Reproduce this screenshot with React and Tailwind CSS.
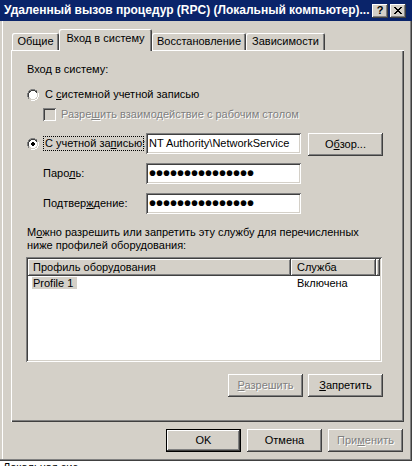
const raised =
  "shadow-[inset_-1px_-1px_#404040,inset_1px_1px_#ffffff,inset_-2px_-2px_#808080,inset_2px_2px_#d4d0c8]";
const defRaised =
  "shadow-[inset_0_0_0_1px_#000000,inset_-2px_-2px_#404040,inset_2px_2px_#ffffff,inset_-3px_-3px_#808080]";
const sunken =
  "shadow-[inset_1px_1px_#808080,inset_-1px_-1px_#ffffff,inset_2px_2px_#404040,inset_-2px_-2px_#d4d0c8]";
const disabledText = "text-[#808080] [text-shadow:1px_1px_0_#ffffff]";

const Btn = ({ children, disabled, isDefault, className = "" }) => (
  <div
    className={`flex h-[23px] w-[75px] items-center justify-center bg-[#d4d0c8] ${
      isDefault ? defRaised : raised
    } ${disabled ? disabledText : "text-black"} ${className}`}
  >
    <span className="whitespace-nowrap">{children}</span>
  </div>
);

const Radio = ({ checked }) => (
  <svg width="12" height="12" viewBox="0 0 12 12" className="shrink-0">
    <path d="M4 0h4v1h2v1h-2v-1h-4v1h-2v2h-1v4h1v2h-1v-2h-1v-4h1v-2h1v-1h1z" fill="#808080" />
    <path d="M4 1h4v1h2v2h-1v-1h-1v-1h-4v1h-1v1h-1v4h-1v-4h1v-2h2z" fill="#404040" />
    <path d="M4 2h4v1h1v1h1v4h-1v1h-1v1h-4v-1h-1v-1h-1v-4h1v-1h1z" fill="#ffffff" />
    <path d="M10 4h1v4h-1v2h-2v1h-4v-1h4v-1h1v-1h1z" fill="#d4d0c8" />
    <path d="M11 4h1v4h-1v2h-1v1h-2v1h-4v-1h4v-1h2v-2h1z" fill="#ffffff" />
    {checked && <path d="M5 4h2v1h1v2h-1v1h-2v-1h-1v-2h1z" fill="#000000" />}
  </svg>
);

const Dots = () => (
  <span className="text-[20px] leading-[13px] font-bold">•••••••••••••••</span>
);

const Tab = ({ children, selected, className = "" }) => (
  <div
    className={`flex items-center justify-center bg-[#d4d0c8] rounded-t-[2px] shadow-[inset_1px_1px_#ffffff,inset_-1px_0_#404040,inset_-2px_0_#808080] ${
      selected ? "h-[22px] pb-[3px]" : "h-[17px] mb-px"
    } ${className}`}
  >
    <span className="whitespace-nowrap">{children}</span>
  </div>
);

export default function App() {
  return (
    <div
      className="h-[466px] w-[417px] overflow-hidden bg-white text-[11px] leading-[13px] text-black"
      style={{ fontFamily: '"Liberation Sans", Arial, sans-serif' }}
    >
      <div className="flex h-[461px] w-[412px] flex-col bg-[#d4d0c8] shadow-[inset_-1px_-1px_#404040,inset_-2px_-2px_#808080,inset_2px_0_#d4d0c8,inset_3px_0_#ffffff]">
        {/* title bar */}
        <div className="flex h-[21px] items-center justify-between bg-[#0a246a] pl-[4px] pr-[6px]">
          <span className="text-[12px] font-bold text-white whitespace-nowrap">
            Удаленный вызов процедур (RPC) (Локальный компьютер)...
          </span>
          <div className="flex gap-[2px]">
            <div className={`flex h-[14px] w-[16px] items-center justify-center bg-[#d4d0c8] ${raised} text-[11px] font-bold`}>
              ?
            </div>
            <div className={`flex h-[14px] w-[16px] items-center justify-center bg-[#d4d0c8] ${raised}`}>
              <svg width="8" height="7" viewBox="0 0 8 7">
                <path d="M0 0h2v1h1v1h2v-1h1v-1h2v1h-1v1h-1v1h-1v1h1v1h1v1h1v1h-2v-1h-1v-1h-2v1h-1v1h-2v-1h1v-1h1v-1h1v-1h-1v-1h-1v-1h-1z" fill="#000" />
              </svg>
            </div>
          </div>
        </div>

        {/* body */}
        <div className="flex flex-col pl-[11px] pr-[8px] pt-[8px]">
          {/* tabs */}
          <div className="relative z-10 -mb-px flex h-[22px] items-end">
            <Tab className="ml-[1px] w-[47px]">Общие</Tab>
            <Tab selected className="w-[93px]">Вход в систему</Tab>
            <Tab className="w-[94px]">Восстановление</Tab>
            <Tab className="w-[79px]">Зависимости</Tab>
          </div>

          {/* panel */}
          <div className="flex h-[372px] w-[393px] flex-col pl-[16px] pt-[13px] shadow-[inset_1px_1px_#ffffff,inset_-1px_-1px_#404040,inset_-2px_-2px_#808080]">
            <div>Вход в систему:</div>

            <div className="mt-[12px] flex h-[13px] items-center">
              <Radio />
              <span className="ml-[6px] whitespace-nowrap">
                С <u>с</u>истемной учетной записью
              </span>
            </div>

            <div className="mt-[7px] ml-[16px] flex h-[13px] items-center">
              <div className={`h-[13px] w-[13px] bg-[#d4d0c8] ${sunken}`} />
              <span className={`ml-[5px] whitespace-nowrap ${disabledText}`}>
                Разре<u>ш</u>ить взаимодействие с рабочим столом
              </span>
            </div>

            <div className="mt-[12px] flex h-[23px] items-start">
              <div className="flex h-[21px] items-center">
                <Radio checked />
              </div>
              <div className="ml-[4px] mt-[3px] flex h-[15px] w-[101px] items-center border border-dotted border-black pl-[1px]">
                <span className="whitespace-nowrap">
                  С учетной за<u>п</u>исью:
                </span>
              </div>
              <div className={`ml-[2px] flex h-[21px] w-[155px] items-center bg-white pl-[3px] ${sunken}`}>
                <span className="whitespace-nowrap">NT Authority\NetworkService</span>
              </div>
              <Btn className="ml-[7px]">
                О<u>б</u>зор...
              </Btn>
            </div>

            <div className="mt-[7px] ml-[16px] flex h-[21px] items-center">
              <span className="w-[103px]">
                Паро<u>л</u>ь:
              </span>
              <div className={`flex h-[21px] w-[155px] items-center bg-white pl-[3px] ${sunken}`}>
                <Dots />
              </div>
            </div>

            <div className="mt-[9px] ml-[16px] flex h-[21px] items-center">
              <span className="w-[103px]">
                Подтвер<u>ж</u>дение:
              </span>
              <div className={`flex h-[21px] w-[155px] items-center bg-white pl-[3px] ${sunken}`}>
                <Dots />
              </div>
            </div>

            <div className="mt-[12px]">
              М<u>о</u>жно разрешить или запретить эту службу для перечисленных
              <br />
              ниже профилей оборудования:
            </div>

            {/* list */}
            <div className={`mt-[5px] -ml-px flex h-[105px] w-[356px] flex-col bg-white p-[2px] ${sunken}`}>
              <div className="flex h-[17px]">
                <div className={`flex w-[263px] items-center bg-[#d4d0c8] pl-[5px] ${raised}`}>
                  Профиль оборудования
                </div>
                <div className={`flex w-[85px] items-center bg-[#d4d0c8] pl-[6px] ${raised}`}>
                  Служба
                </div>
                <div className={`flex-1 bg-[#d4d0c8] ${raised}`} />
              </div>
              <div className="mt-px flex h-[13px] items-center">
                <div className="w-[263px] pl-[4px]">
                  <span className="bg-[#d4d0c8] pl-px pr-[4px]">Profile 1</span>
                </div>
                <div className="pl-[6px]">Включена</div>
              </div>
            </div>

            <div className="mt-[12px] ml-[201px] flex gap-[5px]">
              <Btn disabled>
                <u>Р</u>азрешить
              </Btn>
              <Btn>
                <u>З</u>апретить
              </Btn>
            </div>
          </div>

          {/* dialog buttons */}
          <div className="mt-[7px] flex justify-end gap-[6px] pr-[1px]">
            <Btn isDefault>OK</Btn>
            <Btn>Отмена</Btn>
            <Btn disabled>
              При<u>м</u>енить
            </Btn>
          </div>
        </div>
      </div>
      <div className="pl-[3px]">Локальная сис</div>
    </div>
  );
}
